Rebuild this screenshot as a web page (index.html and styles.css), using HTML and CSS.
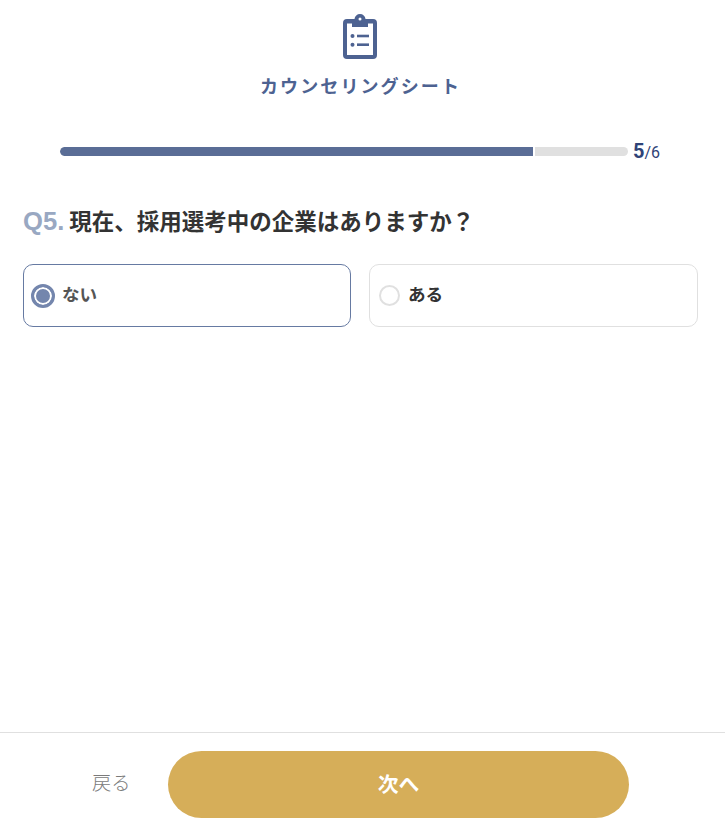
FILE: index.html
```html
<!DOCTYPE html>
<html lang="ja">
<head>
<meta charset="utf-8">
<title>カウンセリングシート</title>
<link rel="stylesheet" href="styles.css">
</head>
<body>
<div class="page">
  <header class="head">
    <svg class="icon" width="34" height="45" viewBox="0 0 34 45" aria-hidden="true">
      <path fill="#4d6291" fill-rule="evenodd" d="M17 0a5.500 5.500 0 0 1 5.500 5H30a4 4 0 0 1 4 4v32a4 4 0 0 1-4 4H4a4 4 0 0 1-4-4V9a4 4 0 0 1 4-4h7.500A5.500 5.500 0 0 1 17 0zm0 3.500a1.500 1.500 0 1 0 0 3 1.500 1.500 0 0 0 0-3zM4 9.500V41h26V9.500h-5V13H9V9.500z"/>
      <circle cx="9.500" cy="22" r="2" fill="#4d6291"/>
      <circle cx="9.500" cy="30.700" r="2" fill="#4d6291"/>
      <rect x="14" y="20.700" width="12" height="2.600" fill="#4d6291"/>
      <rect x="14" y="29.400" width="12" height="2.600" fill="#4d6291"/>
    </svg>
    <h1 class="title">カウンセリングシート</h1>
  </header>
  <div class="progress">
    <div class="track"><div class="fill"></div></div>
    <div class="count"><b>5</b>/6</div>
  </div>
  <main class="question">
    <h2 class="qtitle"><span class="qnum">Q5.</span> 現在、採用選考中の企業はありますか？</h2>
    <div class="options">
      <label class="option selected"><span class="radio"></span><span>ない</span></label>
      <label class="option"><span class="radio"></span><span>ある</span></label>
    </div>
  </main>
  <footer class="foot">
    <a class="back">戻る</a>
    <button class="next">次へ</button>
  </footer>
</div>
</body>
</html>
```
FILE: styles.css
```css
* { box-sizing: border-box; }
html, body { margin: 0; padding: 0; background: #fff; }
body { font-family: "Noto Sans CJK JP", "Noto Sans", sans-serif; color: #333; }
.page { width: 725px; height: 834px; display: flex; flex-direction: column; overflow: hidden; }
.head { display: flex; flex-direction: column; align-items: center; padding: 14px 4px 0 0; }
.icon { display: block; margin-right: 2px; }
.title { margin: 11px 0 0; font-size: 18px; line-height: 30px; font-weight: 700; letter-spacing: 2.100px; color: #4d6291; }
.progress { display: flex; align-items: center; margin-top: 36px; padding-left: 60px; height: 30px; }
.track { width: 568px; height: 9px; background: #e0e0e0; border-radius: 5px; overflow: hidden; }
.fill { width: 473px; height: 100%; background: #5a6d96; border-right: 2px solid #fff; box-sizing: content-box; border-radius: 5px 0 0 5px; }
.count { margin-left: 5px; padding-top: 1px; font-family: "Roboto", sans-serif; font-size: 16px; color: #2f4377; line-height: 30px; }
.count b { font-size: 20px; font-weight: 700; }
.question { padding: 0 27px 0 23px; flex: 1; }
.qtitle { margin: 36px 0 0; font-size: 22.500px; line-height: 36px; font-weight: 700; color: #333; }
.qnum { font-family: "Liberation Sans", sans-serif; font-size: 25.600px; color: #99a8c2; }
.options { display: grid; grid-template-columns: 328px 329px; gap: 18px; margin-top: 25px; }
.option { display: flex; align-items: center; gap: 8px; height: 63px; padding: 0 0 4px 9px; border: 1px solid #e0e0e0; border-radius: 10px; font-size: 17.600px; line-height: 24px; font-weight: 700; color: #333; }
.option .radio { margin-bottom: -4px; }
.option.selected { border-color: #667aa2; color: #555; }
.radio { width: 21px; height: 21px; border: 2px solid #e0e0e0; border-radius: 50%; background: #fff; flex: none; }
.option.selected .radio { width: 24px; height: 24px; margin-left: -2px; margin-right: -1px; border: 3px solid #7486ad; background: #7486ad; box-shadow: inset 0 0 0 2px #fff; }
.foot { display: flex; align-items: flex-start; border-top: 1px solid #e0e0e0; height: 102px; padding: 18px 0 0 168px; position: relative; }
.back { position: absolute; left: 92px; top: 33px; font-size: 19.200px; line-height: 32px; font-weight: 300; color: #7a7a7a; }
.next { width: 461px; height: 67px; border: 0; border-radius: 34px; background: #d6ae59; color: #fff; font: 700 20.800px "Noto Sans CJK JP", sans-serif; padding: 0 0 3px; }
```
